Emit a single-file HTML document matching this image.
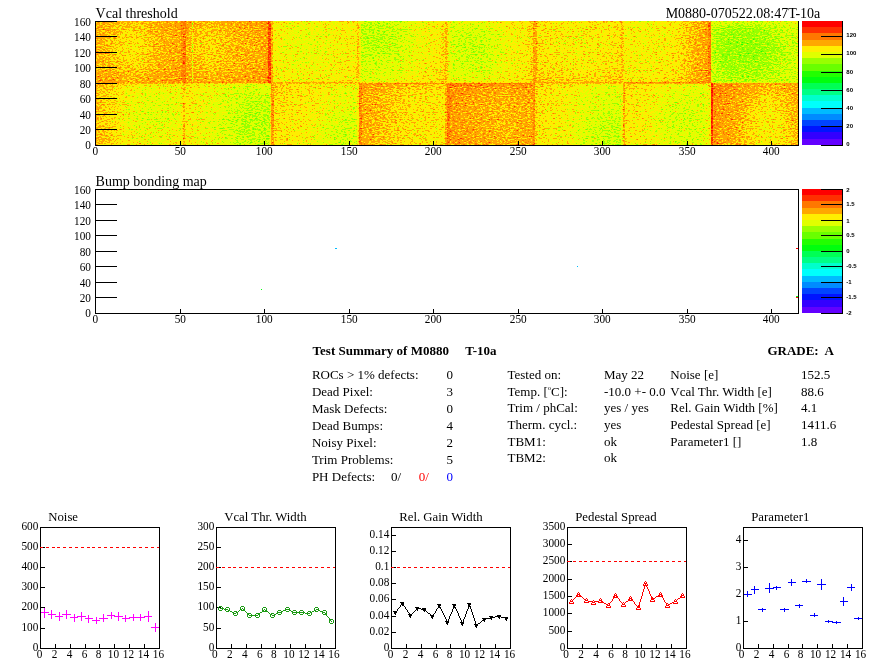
<!DOCTYPE html>
<html lang="en"><head><meta charset="utf-8"><title>Test Summary of M0880 T-10a</title>
<style>
html,body{margin:0;padding:0;background:#fff;}
body{width:896px;height:672px;overflow:hidden;}
svg{display:block;will-change:transform;}
.t{font-family:"Liberation Serif",serif;fill:#000;}
.b{font-family:"Liberation Serif",serif;font-weight:bold;fill:#000;}
.h{font-family:"Liberation Sans",sans-serif;font-weight:bold;fill:#000;}
</style></head><body>
<svg width="896" height="672" viewBox="0 0 896 672">
<defs>
<filter id="hm" filterUnits="userSpaceOnUse" x="95" y="21" width="704" height="125" color-interpolation-filters="sRGB">
<feTurbulence type="fractalNoise" baseFrequency="0.36 0.88" numOctaves="2" seed="3" result="n"/>
<feComponentTransfer in="n" result="n2"><feFuncA type="table" tableValues="0.000 0.000 0.000 0.000 0.038 0.156 0.252 0.330 0.394 0.449 0.500 0.551 0.606 0.670 0.748 0.844 0.962 1.000 1.000 1.000 1.000"/></feComponentTransfer>
<feColorMatrix in="n2" type="matrix" values="0 0 0 1 0  0 0 0 1 0  0 0 0 1 0  0 0 0 0 1" result="ng"/>
<feComposite in="SourceGraphic" in2="ng" operator="arithmetic" k1="0" k2="1" k3="0.360" k4="-0.180" result="v"/>
<feComponentTransfer in="v"><feFuncR type="discrete" tableValues="0.000 0.000 0.133 0.413 0.600 0.880 1.000 1.000 1.000 1.000 1.000"/><feFuncG type="discrete" tableValues="1.000 1.000 1.000 1.000 1.000 1.000 0.933 0.653 0.467 0.187 0.000"/><feFuncB type="discrete" tableValues="0.333 0.053 0.000 0.000 0.000 0.000 0.000 0.000 0.000 0.000 0.000"/></feComponentTransfer>
</filter>
<linearGradient id="g10"><stop offset="0" stop-color="#a9a9a9"/><stop offset="0.2" stop-color="#a4a4a4"/><stop offset="0.45" stop-color="#9e9e9e"/><stop offset="0.7" stop-color="#a6a6a6"/><stop offset="1" stop-color="#adadad"/></linearGradient>
<linearGradient id="v10" x1="0" y1="0" x2="0" y2="1"><stop offset="0" stop-color="#fff" stop-opacity="0.057"/><stop offset="0.3" stop-color="#fff" stop-opacity="0.000"/><stop offset="0.7" stop-color="#fff" stop-opacity="0.000"/><stop offset="1" stop-color="#fff" stop-opacity="0.115"/></linearGradient>
<linearGradient id="g11"><stop offset="0" stop-color="#adadad"/><stop offset="0.12" stop-color="#a5a5a5"/><stop offset="0.3" stop-color="#a1a1a1"/><stop offset="0.5" stop-color="#a5a5a5"/><stop offset="0.9" stop-color="#acacac"/><stop offset="1" stop-color="#b6b6b6"/></linearGradient>
<linearGradient id="v11" x1="0" y1="0" x2="0" y2="1"><stop offset="0" stop-color="#fff" stop-opacity="0.079"/><stop offset="0.25" stop-color="#fff" stop-opacity="0.000"/><stop offset="0.7" stop-color="#fff" stop-opacity="0.000"/><stop offset="1" stop-color="#fff" stop-opacity="0.099"/></linearGradient>
<linearGradient id="g12"><stop offset="0" stop-color="#909090"/><stop offset="0.4" stop-color="#8b8b8b"/><stop offset="0.7" stop-color="#8e8e8e"/><stop offset="1" stop-color="#929292"/></linearGradient>
<linearGradient id="v12" x1="0" y1="0" x2="0" y2="1"><stop offset="0" stop-color="#fff" stop-opacity="0.015"/><stop offset="0.5" stop-color="#fff" stop-opacity="0.000"/><stop offset="1" stop-color="#fff" stop-opacity="0.030"/></linearGradient>
<linearGradient id="g13"><stop offset="0" stop-color="#787878"/><stop offset="0.45" stop-color="#808080"/><stop offset="0.7" stop-color="#8c8c8c"/><stop offset="0.9" stop-color="#929292"/><stop offset="1" stop-color="#9e9e9e"/></linearGradient>
<linearGradient id="v13" x1="0" y1="0" x2="0" y2="1"><stop offset="0" stop-color="#fff" stop-opacity="0.000"/><stop offset="0.6" stop-color="#fff" stop-opacity="0.015"/><stop offset="1" stop-color="#fff" stop-opacity="0.073"/></linearGradient>
<linearGradient id="g14"><stop offset="0" stop-color="#909090"/><stop offset="0.06" stop-color="#7e7e7e"/><stop offset="0.4" stop-color="#7e7e7e"/><stop offset="0.65" stop-color="#8b8b8b"/><stop offset="0.9" stop-color="#929292"/><stop offset="1" stop-color="#a1a1a1"/></linearGradient>
<linearGradient id="v14" x1="0" y1="0" x2="0" y2="1"><stop offset="0" stop-color="#fff" stop-opacity="0.074"/><stop offset="0.2" stop-color="#fff" stop-opacity="0.000"/><stop offset="0.8" stop-color="#fff" stop-opacity="0.015"/><stop offset="1" stop-color="#fff" stop-opacity="0.089"/></linearGradient>
<linearGradient id="g15"><stop offset="0" stop-color="#999999"/><stop offset="0.3" stop-color="#929292"/><stop offset="0.5" stop-color="#909090"/><stop offset="0.8" stop-color="#949494"/><stop offset="1" stop-color="#999999"/></linearGradient>
<linearGradient id="v15" x1="0" y1="0" x2="0" y2="1"><stop offset="0" stop-color="#fff" stop-opacity="0.032"/><stop offset="0.3" stop-color="#fff" stop-opacity="0.000"/><stop offset="0.75" stop-color="#fff" stop-opacity="0.032"/><stop offset="1" stop-color="#fff" stop-opacity="0.128"/></linearGradient>
<linearGradient id="g16"><stop offset="0" stop-color="#909090"/><stop offset="0.4" stop-color="#8f8f8f"/><stop offset="0.6" stop-color="#959595"/><stop offset="0.8" stop-color="#a5a5a5"/><stop offset="1" stop-color="#b1b1b1"/></linearGradient>
<linearGradient id="v16" x1="0" y1="0" x2="0" y2="1"><stop offset="0" stop-color="#fff" stop-opacity="0.000"/><stop offset="0.8" stop-color="#fff" stop-opacity="0.017"/><stop offset="1" stop-color="#fff" stop-opacity="0.068"/></linearGradient>
<linearGradient id="g17"><stop offset="0" stop-color="#777777"/><stop offset="0.15" stop-color="#6e6e6e"/><stop offset="0.5" stop-color="#6d6d6d"/><stop offset="0.8" stop-color="#757575"/><stop offset="1" stop-color="#7c7c7c"/></linearGradient>
<linearGradient id="v17" x1="0" y1="0" x2="0" y2="1"><stop offset="0" stop-color="#fff" stop-opacity="0.122"/><stop offset="0.12" stop-color="#fff" stop-opacity="0.024"/><stop offset="0.5" stop-color="#fff" stop-opacity="0.000"/><stop offset="1" stop-color="#fff" stop-opacity="0.037"/></linearGradient>
<linearGradient id="g00"><stop offset="0" stop-color="#a3a3a3"/><stop offset="0.2" stop-color="#9b9b9b"/><stop offset="0.35" stop-color="#8f8f8f"/><stop offset="0.7" stop-color="#888888"/><stop offset="1" stop-color="#8a8a8a"/></linearGradient>
<linearGradient id="v00" x1="0" y1="0" x2="0" y2="1"><stop offset="0" stop-color="#fff" stop-opacity="0.094"/><stop offset="0.1" stop-color="#fff" stop-opacity="0.016"/><stop offset="0.6" stop-color="#fff" stop-opacity="0.000"/><stop offset="1" stop-color="#fff" stop-opacity="0.047"/></linearGradient>
<linearGradient id="g01"><stop offset="0" stop-color="#979797"/><stop offset="0.1" stop-color="#8f8f8f"/><stop offset="0.4" stop-color="#848484"/><stop offset="0.7" stop-color="#7c7c7c"/><stop offset="1" stop-color="#797979"/></linearGradient>
<linearGradient id="v01" x1="0" y1="0" x2="0" y2="1"><stop offset="0" stop-color="#fff" stop-opacity="0.070"/><stop offset="0.15" stop-color="#fff" stop-opacity="0.028"/><stop offset="0.7" stop-color="#fff" stop-opacity="0.000"/><stop offset="1" stop-color="#fff" stop-opacity="0.000"/></linearGradient>
<linearGradient id="g02"><stop offset="0" stop-color="#9b9b9b"/><stop offset="0.15" stop-color="#959595"/><stop offset="0.5" stop-color="#8f8f8f"/><stop offset="0.8" stop-color="#848484"/><stop offset="1" stop-color="#838383"/></linearGradient>
<linearGradient id="v02" x1="0" y1="0" x2="0" y2="1"><stop offset="0" stop-color="#fff" stop-opacity="0.075"/><stop offset="0.3" stop-color="#fff" stop-opacity="0.030"/><stop offset="1" stop-color="#fff" stop-opacity="0.000"/></linearGradient>
<linearGradient id="g03"><stop offset="0" stop-color="#acacac"/><stop offset="0.2" stop-color="#a6a6a6"/><stop offset="0.4" stop-color="#9e9e9e"/><stop offset="0.6" stop-color="#979797"/><stop offset="1" stop-color="#949494"/></linearGradient>
<linearGradient id="v03" x1="0" y1="0" x2="0" y2="1"><stop offset="0" stop-color="#fff" stop-opacity="0.141"/><stop offset="0.15" stop-color="#fff" stop-opacity="0.035"/><stop offset="1" stop-color="#fff" stop-opacity="0.000"/></linearGradient>
<linearGradient id="g04"><stop offset="0" stop-color="#b4b4b4"/><stop offset="0.3" stop-color="#acacac"/><stop offset="0.65" stop-color="#a5a5a5"/><stop offset="1" stop-color="#acacac"/></linearGradient>
<linearGradient id="v04" x1="0" y1="0" x2="0" y2="1"><stop offset="0" stop-color="#fff" stop-opacity="0.204"/><stop offset="0.12" stop-color="#fff" stop-opacity="0.061"/><stop offset="0.5" stop-color="#fff" stop-opacity="0.000"/><stop offset="1" stop-color="#fff" stop-opacity="0.041"/></linearGradient>
<linearGradient id="g05"><stop offset="0" stop-color="#979797"/><stop offset="0.3" stop-color="#909090"/><stop offset="0.6" stop-color="#848484"/><stop offset="1" stop-color="#7c7c7c"/></linearGradient>
<linearGradient id="v05" x1="0" y1="0" x2="0" y2="1"><stop offset="0" stop-color="#fff" stop-opacity="0.087"/><stop offset="0.2" stop-color="#fff" stop-opacity="0.029"/><stop offset="1" stop-color="#fff" stop-opacity="0.000"/></linearGradient>
<linearGradient id="g06"><stop offset="0" stop-color="#979797"/><stop offset="0.3" stop-color="#8f8f8f"/><stop offset="0.6" stop-color="#848484"/><stop offset="0.9" stop-color="#838383"/><stop offset="1" stop-color="#8a8a8a"/></linearGradient>
<linearGradient id="v06" x1="0" y1="0" x2="0" y2="1"><stop offset="0" stop-color="#fff" stop-opacity="0.088"/><stop offset="0.15" stop-color="#fff" stop-opacity="0.015"/><stop offset="1" stop-color="#fff" stop-opacity="0.000"/></linearGradient>
<linearGradient id="g07"><stop offset="0" stop-color="#b6b6b6"/><stop offset="0.2" stop-color="#adadad"/><stop offset="0.45" stop-color="#a1a1a1"/><stop offset="0.65" stop-color="#979797"/><stop offset="0.85" stop-color="#9c9c9c"/><stop offset="1" stop-color="#a8a8a8"/></linearGradient>
<linearGradient id="v07" x1="0" y1="0" x2="0" y2="1"><stop offset="0" stop-color="#fff" stop-opacity="0.151"/><stop offset="0.25" stop-color="#fff" stop-opacity="0.057"/><stop offset="1" stop-color="#fff" stop-opacity="0.000"/></linearGradient>
<radialGradient id="bl"><stop offset="0" stop-color="#000" stop-opacity="1"/><stop offset="0.5" stop-color="#000" stop-opacity="0.6"/><stop offset="1" stop-color="#000" stop-opacity="0"/></radialGradient>
</defs>
<g filter="url(#hm)" shape-rendering="crispEdges">
<rect x="95" y="21" width="704" height="125" fill="#909090"/>
<rect x="95.50" y="21.00" width="88.17" height="62.42" fill="url(#g10)"/><rect x="95.50" y="21.00" width="88.17" height="62.42" fill="url(#v10)"/>
<clipPath id="c10"><rect x="95.50" y="21.00" width="87.88" height="62.12"/></clipPath><ellipse cx="130.7" cy="45.9" rx="28.1" ry="26.1" fill="url(#bl)" opacity="0.051" clip-path="url(#c10)"/>
<rect x="95.50" y="82.03" width="87.88" height="1.1" fill="#b2b2b2"/><rect x="95.50" y="21.00" width="1.69" height="62.42" fill="#acacac"/><rect x="180.84" y="21.00" width="2.53" height="62.42" fill="#b9b9b9"/>
<rect x="183.38" y="21.00" width="88.17" height="62.42" fill="url(#g11)"/><rect x="183.38" y="21.00" width="88.17" height="62.42" fill="url(#v11)"/>
<clipPath id="c11"><rect x="183.38" y="21.00" width="87.88" height="62.12"/></clipPath><ellipse cx="209.7" cy="42.7" rx="26.4" ry="24.9" fill="url(#bl)" opacity="0.040" clip-path="url(#c11)"/>
<rect x="183.38" y="82.03" width="87.88" height="1.1" fill="#b6b6b6"/><rect x="183.38" y="21.00" width="2.53" height="62.42" fill="#c0c0c0"/><rect x="267.87" y="21.00" width="3.38" height="62.42" fill="#d4d4d4"/>
<rect x="192.16" y="21.00" width="1.18" height="62.12" fill="#868686"/>
<rect x="271.25" y="21.00" width="88.17" height="62.42" fill="url(#g12)"/><rect x="271.25" y="21.00" width="88.17" height="62.42" fill="url(#v12)"/>
<clipPath id="c12"><rect x="271.25" y="21.00" width="87.88" height="62.12"/></clipPath><ellipse cx="306.4" cy="45.9" rx="33.4" ry="28.0" fill="url(#bl)" opacity="0.036" clip-path="url(#c12)"/>
<rect x="271.25" y="82.03" width="87.88" height="1.1" fill="#acacac"/><rect x="271.25" y="21.00" width="1.69" height="62.42" fill="#acacac"/><rect x="357.44" y="21.00" width="1.69" height="62.42" fill="#a5a5a5"/>
<rect x="359.12" y="21.00" width="88.17" height="62.42" fill="url(#g13)"/><rect x="359.12" y="21.00" width="88.17" height="62.42" fill="url(#v13)"/>
<clipPath id="c13"><rect x="359.12" y="21.00" width="87.88" height="62.12"/></clipPath><ellipse cx="383.7" cy="39.6" rx="36.9" ry="31.1" fill="url(#bl)" opacity="0.074" clip-path="url(#c13)"/>
<rect x="359.12" y="82.03" width="87.88" height="1.1" fill="#9e9e9e"/><rect x="359.12" y="21.00" width="1.69" height="62.42" fill="#909090"/><rect x="445.31" y="21.00" width="1.69" height="62.42" fill="#a8a8a8"/>
<rect x="447.00" y="21.00" width="88.17" height="62.42" fill="url(#g14)"/><rect x="447.00" y="21.00" width="88.17" height="62.42" fill="url(#v14)"/>
<clipPath id="c14"><rect x="447.00" y="21.00" width="87.88" height="62.12"/></clipPath><ellipse cx="477.8" cy="49.0" rx="33.4" ry="31.1" fill="url(#bl)" opacity="0.060" clip-path="url(#c14)"/>
<rect x="447.00" y="82.03" width="87.88" height="1.1" fill="#9e9e9e"/><rect x="447.00" y="21.00" width="1.35" height="62.42" fill="#9e9e9e"/><rect x="533.19" y="21.00" width="1.69" height="62.42" fill="#afafaf"/>
<rect x="534.88" y="21.00" width="88.17" height="62.42" fill="url(#g15)"/><rect x="534.88" y="21.00" width="88.17" height="62.42" fill="url(#v15)"/>
<rect x="534.88" y="82.03" width="87.88" height="1.1" fill="#afafaf"/><rect x="534.88" y="21.00" width="1.69" height="62.42" fill="#afafaf"/><rect x="621.06" y="21.00" width="1.69" height="62.42" fill="#a5a5a5"/>
<rect x="622.75" y="21.00" width="88.17" height="62.42" fill="url(#g16)"/><rect x="622.75" y="21.00" width="88.17" height="62.42" fill="url(#v16)"/>
<rect x="622.75" y="82.03" width="87.88" height="1.1" fill="#b9b9b9"/><rect x="622.75" y="21.00" width="1.69" height="62.42" fill="#9e9e9e"/><rect x="708.09" y="21.00" width="2.53" height="62.42" fill="#c3c3c3"/>
<rect x="710.62" y="21.00" width="88.17" height="62.42" fill="url(#g17)"/><rect x="710.62" y="21.00" width="88.17" height="62.42" fill="url(#v17)"/>
<clipPath id="c17"><rect x="710.62" y="21.00" width="87.88" height="62.12"/></clipPath><ellipse cx="745.8" cy="49.0" rx="43.9" ry="34.2" fill="url(#bl)" opacity="0.073" clip-path="url(#c17)"/>
<rect x="710.62" y="82.03" width="87.88" height="1.1" fill="#838383"/><rect x="710.62" y="21.00" width="1.69" height="62.42" fill="#7f7f7f"/><rect x="796.81" y="21.00" width="1.69" height="62.42" fill="#868686"/>
<rect x="95.50" y="83.12" width="88.17" height="62.42" fill="url(#g00)"/><rect x="95.50" y="83.12" width="88.17" height="62.42" fill="url(#v00)"/>
<clipPath id="c00"><rect x="95.50" y="83.12" width="87.88" height="62.12"/></clipPath><ellipse cx="148.2" cy="117.3" rx="36.9" ry="31.1" fill="url(#bl)" opacity="0.046" clip-path="url(#c00)"/>
<rect x="95.50" y="83.12" width="87.88" height="0.9" fill="#a8a8a8"/><rect x="95.50" y="83.12" width="1.69" height="62.42" fill="#acacac"/><rect x="181.69" y="83.12" width="1.69" height="62.42" fill="#979797"/>
<rect x="183.38" y="83.12" width="88.17" height="62.42" fill="url(#g01)"/><rect x="183.38" y="83.12" width="88.17" height="62.42" fill="url(#v01)"/>
<clipPath id="c01"><rect x="183.38" y="83.12" width="87.88" height="62.12"/></clipPath><ellipse cx="249.3" cy="120.4" rx="35.1" ry="34.2" fill="url(#bl)" opacity="0.076" clip-path="url(#c01)"/>
<rect x="183.38" y="83.12" width="87.88" height="0.9" fill="#9e9e9e"/><rect x="183.38" y="83.12" width="1.69" height="62.42" fill="#a5a5a5"/><rect x="269.56" y="83.12" width="1.69" height="62.42" fill="#8d8d8d"/>
<rect x="271.25" y="83.12" width="88.17" height="62.42" fill="url(#g02)"/><rect x="271.25" y="83.12" width="88.17" height="62.42" fill="url(#v02)"/>
<clipPath id="c02"><rect x="271.25" y="83.12" width="87.88" height="62.12"/></clipPath><ellipse cx="341.6" cy="132.8" rx="35.1" ry="28.0" fill="url(#bl)" opacity="0.072" clip-path="url(#c02)"/>
<rect x="271.25" y="83.12" width="87.88" height="0.9" fill="#a5a5a5"/><rect x="271.25" y="83.12" width="2.53" height="62.42" fill="#b6b6b6"/><rect x="357.44" y="83.12" width="1.69" height="62.42" fill="#949494"/>
<rect x="359.12" y="83.12" width="88.17" height="62.42" fill="url(#g03)"/><rect x="359.12" y="83.12" width="88.17" height="62.42" fill="url(#v03)"/>
<rect x="359.12" y="83.12" width="87.88" height="0.9" fill="#b9b9b9"/><rect x="359.12" y="83.12" width="2.53" height="62.42" fill="#bcbcbc"/><rect x="445.31" y="83.12" width="1.69" height="62.42" fill="#acacac"/>
<rect x="447.00" y="83.12" width="88.17" height="62.42" fill="url(#g04)"/><rect x="447.00" y="83.12" width="88.17" height="62.42" fill="url(#v04)"/>
<rect x="447.00" y="83.12" width="87.88" height="0.9" fill="#c0c0c0"/><rect x="447.00" y="83.12" width="2.53" height="62.42" fill="#c0c0c0"/><rect x="533.19" y="83.12" width="1.69" height="62.42" fill="#b9b9b9"/>
<rect x="534.88" y="83.12" width="88.17" height="62.42" fill="url(#g05)"/><rect x="534.88" y="83.12" width="88.17" height="62.42" fill="url(#v05)"/>
<clipPath id="c05"><rect x="534.88" y="83.12" width="87.88" height="62.12"/></clipPath><ellipse cx="605.2" cy="129.7" rx="35.1" ry="31.1" fill="url(#bl)" opacity="0.074" clip-path="url(#c05)"/>
<rect x="534.88" y="83.12" width="87.88" height="0.9" fill="#a5a5a5"/><rect x="534.88" y="83.12" width="1.69" height="62.42" fill="#9e9e9e"/><rect x="621.06" y="83.12" width="1.69" height="62.42" fill="#8d8d8d"/>
<rect x="622.75" y="83.12" width="88.17" height="62.42" fill="url(#g06)"/><rect x="622.75" y="83.12" width="88.17" height="62.42" fill="url(#v06)"/>
<clipPath id="c06"><rect x="622.75" y="83.12" width="87.88" height="62.12"/></clipPath><ellipse cx="679.9" cy="120.4" rx="35.1" ry="31.1" fill="url(#bl)" opacity="0.061" clip-path="url(#c06)"/>
<rect x="622.75" y="83.12" width="87.88" height="0.9" fill="#acacac"/><rect x="622.75" y="83.12" width="2.53" height="62.42" fill="#afafaf"/><rect x="709.44" y="83.12" width="1.18" height="62.42" fill="#909090"/>
<rect x="710.62" y="83.12" width="88.17" height="62.42" fill="url(#g07)"/><rect x="710.62" y="83.12" width="88.17" height="62.42" fill="url(#v07)"/>
<clipPath id="c07"><rect x="710.62" y="83.12" width="87.88" height="62.12"/></clipPath><ellipse cx="763.4" cy="123.5" rx="28.1" ry="31.1" fill="url(#bl)" opacity="0.062" clip-path="url(#c07)"/>
<rect x="710.62" y="83.12" width="87.88" height="0.9" fill="#b2b2b2"/><rect x="710.62" y="83.12" width="2.53" height="62.42" fill="#e2e2e2"/><rect x="796.81" y="83.12" width="1.69" height="62.42" fill="#acacac"/>
</g>
<text class="t" transform="translate(91.0 148.6) scale(0.94 1)" font-size="12" text-anchor="end">0</text>
<text class="t" transform="translate(91.0 134.0) scale(0.94 1)" font-size="12" text-anchor="end">20</text>
<text class="t" transform="translate(91.0 119.0) scale(0.94 1)" font-size="12" text-anchor="end">40</text>
<text class="t" transform="translate(91.0 103.0) scale(0.94 1)" font-size="12" text-anchor="end">60</text>
<text class="t" transform="translate(91.0 88.0) scale(0.94 1)" font-size="12" text-anchor="end">80</text>
<text class="t" transform="translate(91.0 72.0) scale(0.94 1)" font-size="12" text-anchor="end">100</text>
<text class="t" transform="translate(91.0 57.0) scale(0.94 1)" font-size="12" text-anchor="end">120</text>
<text class="t" transform="translate(91.0 41.0) scale(0.94 1)" font-size="12" text-anchor="end">140</text>
<text class="t" transform="translate(91.0 26.0) scale(0.94 1)" font-size="12" text-anchor="end">160</text>
<text class="t" transform="translate(95.3 155.0) scale(0.94 1)" font-size="12" text-anchor="middle">0</text>
<text class="t" transform="translate(180.3 155.0) scale(0.94 1)" font-size="12" text-anchor="middle">50</text>
<text class="t" transform="translate(264.3 155.0) scale(0.94 1)" font-size="12" text-anchor="middle">100</text>
<text class="t" transform="translate(349.3 155.0) scale(0.94 1)" font-size="12" text-anchor="middle">150</text>
<text class="t" transform="translate(433.3 155.0) scale(0.94 1)" font-size="12" text-anchor="middle">200</text>
<text class="t" transform="translate(518.3 155.0) scale(0.94 1)" font-size="12" text-anchor="middle">250</text>
<text class="t" transform="translate(602.3 155.0) scale(0.94 1)" font-size="12" text-anchor="middle">300</text>
<text class="t" transform="translate(687.3 155.0) scale(0.94 1)" font-size="12" text-anchor="middle">350</text>
<text class="t" transform="translate(771.3 155.0) scale(0.94 1)" font-size="12" text-anchor="middle">400</text>
<path d="M95.5 21V146M95 145.5H799M798.5 21V146M95 129.5H117M95 114.5H117M95 98.5H117M95 83.5H117M95 67.5H117M95 52.5H117M95 36.5H117M95 21.5H117M180.5 141V145M264.5 141V145M349.5 141V145M433.5 141V145M518.5 141V145M602.5 141V145M687.5 141V145M771.5 141V145" stroke="#000" stroke-width="1" fill="none" shape-rendering="crispEdges"/>
<text class="t" x="95.6" y="18.0" font-size="14">Vcal threshold</text>
<text class="t" x="820.3" y="18" font-size="14" text-anchor="end">M0880-070522.08:47T-10a</text>
<rect x="802" y="139" width="40" height="6" fill="#6300ff" shape-rendering="crispEdges"/>
<rect x="802" y="132" width="40" height="7" fill="#3300ff" shape-rendering="crispEdges"/>
<rect x="802" y="126" width="40" height="6" fill="#0014ff" shape-rendering="crispEdges"/>
<rect x="802" y="120" width="40" height="6" fill="#0044ff" shape-rendering="crispEdges"/>
<rect x="802" y="114" width="40" height="6" fill="#008bff" shape-rendering="crispEdges"/>
<rect x="802" y="108" width="40" height="6" fill="#00bbff" shape-rendering="crispEdges"/>
<rect x="802" y="101" width="40" height="7" fill="#00fffc" shape-rendering="crispEdges"/>
<rect x="802" y="95" width="40" height="6" fill="#00ffcc" shape-rendering="crispEdges"/>
<rect x="802" y="89" width="40" height="6" fill="#00ff85" shape-rendering="crispEdges"/>
<rect x="802" y="83" width="40" height="6" fill="#00ff55" shape-rendering="crispEdges"/>
<rect x="802" y="77" width="40" height="6" fill="#00ff0e" shape-rendering="crispEdges"/>
<rect x="802" y="71" width="40" height="6" fill="#22ff00" shape-rendering="crispEdges"/>
<rect x="802" y="64" width="40" height="7" fill="#69ff00" shape-rendering="crispEdges"/>
<rect x="802" y="58" width="40" height="6" fill="#99ff00" shape-rendering="crispEdges"/>
<rect x="802" y="52" width="40" height="6" fill="#e0ff00" shape-rendering="crispEdges"/>
<rect x="802" y="46" width="40" height="6" fill="#ffee00" shape-rendering="crispEdges"/>
<rect x="802" y="40" width="40" height="6" fill="#ffa700" shape-rendering="crispEdges"/>
<rect x="802" y="33" width="40" height="7" fill="#ff7700" shape-rendering="crispEdges"/>
<rect x="802" y="27" width="40" height="6" fill="#ff3000" shape-rendering="crispEdges"/>
<rect x="802" y="21" width="40" height="6" fill="#ff0000" shape-rendering="crispEdges"/>
<text class="h" x="846.3" y="37.2" font-size="6">120</text>
<text class="h" x="846.3" y="55.2" font-size="6">100</text>
<text class="h" x="846.3" y="74.2" font-size="6">80</text>
<text class="h" x="846.3" y="92.1" font-size="6">60</text>
<text class="h" x="846.3" y="110.1" font-size="6">40</text>
<text class="h" x="846.3" y="128.1" font-size="6">20</text>
<text class="h" x="846.3" y="146.0" font-size="6">0</text>
<path d="M842.5 21V146M821 36.5H843M821 54.5H843M821 72.5H843M821 90.5H843M821 108.5H843M821 126.5H843M821 145.5H843" stroke="#000" stroke-width="1" fill="none" shape-rendering="crispEdges"/>
<text class="t" transform="translate(91.0 316.6) scale(0.94 1)" font-size="12" text-anchor="end">0</text>
<text class="t" transform="translate(91.0 302.0) scale(0.94 1)" font-size="12" text-anchor="end">20</text>
<text class="t" transform="translate(91.0 287.0) scale(0.94 1)" font-size="12" text-anchor="end">40</text>
<text class="t" transform="translate(91.0 271.0) scale(0.94 1)" font-size="12" text-anchor="end">60</text>
<text class="t" transform="translate(91.0 256.0) scale(0.94 1)" font-size="12" text-anchor="end">80</text>
<text class="t" transform="translate(91.0 240.0) scale(0.94 1)" font-size="12" text-anchor="end">100</text>
<text class="t" transform="translate(91.0 225.0) scale(0.94 1)" font-size="12" text-anchor="end">120</text>
<text class="t" transform="translate(91.0 209.0) scale(0.94 1)" font-size="12" text-anchor="end">140</text>
<text class="t" transform="translate(91.0 194.0) scale(0.94 1)" font-size="12" text-anchor="end">160</text>
<text class="t" transform="translate(95.3 323.0) scale(0.94 1)" font-size="12" text-anchor="middle">0</text>
<text class="t" transform="translate(180.3 323.0) scale(0.94 1)" font-size="12" text-anchor="middle">50</text>
<text class="t" transform="translate(264.3 323.0) scale(0.94 1)" font-size="12" text-anchor="middle">100</text>
<text class="t" transform="translate(349.3 323.0) scale(0.94 1)" font-size="12" text-anchor="middle">150</text>
<text class="t" transform="translate(433.3 323.0) scale(0.94 1)" font-size="12" text-anchor="middle">200</text>
<text class="t" transform="translate(518.3 323.0) scale(0.94 1)" font-size="12" text-anchor="middle">250</text>
<text class="t" transform="translate(602.3 323.0) scale(0.94 1)" font-size="12" text-anchor="middle">300</text>
<text class="t" transform="translate(687.3 323.0) scale(0.94 1)" font-size="12" text-anchor="middle">350</text>
<text class="t" transform="translate(771.3 323.0) scale(0.94 1)" font-size="12" text-anchor="middle">400</text>
<path d="M95.5 189V314M95 313.5H799M798.5 189V314M95 189.5H799M95 297.5H117M95 282.5H117M95 266.5H117M95 251.5H117M95 235.5H117M95 220.5H117M95 204.5H117M180.5 309V313M264.5 309V313M349.5 309V313M433.5 309V313M518.5 309V313M602.5 309V313M687.5 309V313M771.5 309V313" stroke="#000" stroke-width="1" fill="none" shape-rendering="crispEdges"/>
<text class="t" x="95.6" y="186.0" font-size="14">Bump bonding map</text>
<rect x="802" y="307" width="40" height="6" fill="#6300ff" shape-rendering="crispEdges"/>
<rect x="802" y="300" width="40" height="7" fill="#3300ff" shape-rendering="crispEdges"/>
<rect x="802" y="294" width="40" height="6" fill="#0014ff" shape-rendering="crispEdges"/>
<rect x="802" y="288" width="40" height="6" fill="#0044ff" shape-rendering="crispEdges"/>
<rect x="802" y="282" width="40" height="6" fill="#008bff" shape-rendering="crispEdges"/>
<rect x="802" y="276" width="40" height="6" fill="#00bbff" shape-rendering="crispEdges"/>
<rect x="802" y="269" width="40" height="7" fill="#00fffc" shape-rendering="crispEdges"/>
<rect x="802" y="263" width="40" height="6" fill="#00ffcc" shape-rendering="crispEdges"/>
<rect x="802" y="257" width="40" height="6" fill="#00ff85" shape-rendering="crispEdges"/>
<rect x="802" y="251" width="40" height="6" fill="#00ff55" shape-rendering="crispEdges"/>
<rect x="802" y="245" width="40" height="6" fill="#00ff0e" shape-rendering="crispEdges"/>
<rect x="802" y="239" width="40" height="6" fill="#22ff00" shape-rendering="crispEdges"/>
<rect x="802" y="232" width="40" height="7" fill="#69ff00" shape-rendering="crispEdges"/>
<rect x="802" y="226" width="40" height="6" fill="#99ff00" shape-rendering="crispEdges"/>
<rect x="802" y="220" width="40" height="6" fill="#e0ff00" shape-rendering="crispEdges"/>
<rect x="802" y="214" width="40" height="6" fill="#ffee00" shape-rendering="crispEdges"/>
<rect x="802" y="208" width="40" height="6" fill="#ffa700" shape-rendering="crispEdges"/>
<rect x="802" y="201" width="40" height="7" fill="#ff7700" shape-rendering="crispEdges"/>
<rect x="802" y="195" width="40" height="6" fill="#ff3000" shape-rendering="crispEdges"/>
<rect x="802" y="189" width="40" height="6" fill="#ff0000" shape-rendering="crispEdges"/>
<text class="h" x="846.3" y="192.0" font-size="6">2</text>
<text class="h" x="846.3" y="206.2" font-size="6">1.5</text>
<text class="h" x="846.3" y="223.0" font-size="6">1</text>
<text class="h" x="846.3" y="237.2" font-size="6">0.5</text>
<text class="h" x="846.3" y="253.2" font-size="6">0</text>
<text class="h" x="846.3" y="268.2" font-size="6">-0.5</text>
<text class="h" x="846.3" y="284.2" font-size="6">-1</text>
<text class="h" x="846.3" y="299.2" font-size="6">-1.5</text>
<text class="h" x="846.3" y="315.2" font-size="6">-2</text>
<path d="M842.5 189V314M821 189.5H843M821 204.5H843M821 220.5H843M821 235.5H843M821 251.5H843M821 266.5H843M821 282.5H843M821 297.5H843M821 313.5H843" stroke="#000" stroke-width="1" fill="none" shape-rendering="crispEdges"/>
<g shape-rendering="crispEdges"><rect x="335" y="248" width="2" height="1" fill="#00bbff"/><rect x="261" y="289" width="1" height="1" fill="#00ff0e"/><rect x="577" y="266" width="1" height="1" fill="#00bbff"/><rect x="796" y="248" width="2" height="1" fill="#ff0000"/><rect x="796" y="296" width="2" height="1" fill="#00ff0e"/><rect x="796" y="297" width="2" height="1" fill="#ff0000"/></g>
<text class="b" x="312.6" y="354.6" font-size="13">Test Summary of M0880</text>
<text class="b" x="465.2" y="354.6" font-size="13">T-10a</text>
<text class="b" x="767.4" y="354.6" font-size="13" xml:space="preserve">GRADE:  A</text>
<text class="t" x="311.9" y="379.0" font-size="13">ROCs &gt; 1% defects:</text><text class="t" x="446.6" y="379.0" font-size="13">0</text>
<text class="t" x="311.9" y="396.0" font-size="13">Dead Pixel:</text><text class="t" x="446.6" y="396.0" font-size="13">3</text>
<text class="t" x="311.9" y="413.0" font-size="13">Mask Defects:</text><text class="t" x="446.6" y="413.0" font-size="13">0</text>
<text class="t" x="311.9" y="430.0" font-size="13">Dead Bumps:</text><text class="t" x="446.6" y="430.0" font-size="13">4</text>
<text class="t" x="311.9" y="447.0" font-size="13">Noisy Pixel:</text><text class="t" x="446.6" y="447.0" font-size="13">2</text>
<text class="t" x="311.9" y="464.0" font-size="13">Trim Problems:</text><text class="t" x="446.6" y="464.0" font-size="13">5</text>
<text class="t" x="311.9" y="481.0" font-size="13">PH Defects:</text><text class="t" x="391" y="481.0" font-size="13">0/</text><text class="t" x="418.8" y="481.0" font-size="13" style="fill:#ff0000">0/</text><text class="t" x="446.6" y="481.0" font-size="13" style="fill:#0000ff">0</text>
<text class="t" x="507.5" y="379.0" font-size="13">Tested on:</text><text class="t" x="604" y="379.0" font-size="13">May 22</text>
<text class="t" x="507.5" y="396.0" font-size="13">Temp. [<tspan font-size="6.5" dy="-6.3">o</tspan><tspan dy="6.3">C]:</tspan></text><text class="t" x="604" y="396.0" font-size="13">-10.0 +- 0.0</text>
<text class="t" x="507.5" y="412.0" font-size="13">Trim / phCal:</text><text class="t" x="604" y="412.0" font-size="13">yes / yes</text>
<text class="t" x="507.5" y="429.0" font-size="13">Therm. cycl.:</text><text class="t" x="604" y="429.0" font-size="13">yes</text>
<text class="t" x="507.5" y="446.0" font-size="13">TBM1:</text><text class="t" x="604" y="446.0" font-size="13">ok</text>
<text class="t" x="507.5" y="462.0" font-size="13">TBM2:</text><text class="t" x="604" y="462.0" font-size="13">ok</text>
<text class="t" x="670.3" y="379.0" font-size="13">Noise [e]</text><text class="t" x="800.9" y="379.0" font-size="13">152.5</text>
<text class="t" x="670.3" y="396.0" font-size="13">Vcal Thr. Width [e]</text><text class="t" x="800.9" y="396.0" font-size="13">88.6</text>
<text class="t" x="670.3" y="412.0" font-size="13">Rel. Gain Width [%]</text><text class="t" x="800.9" y="412.0" font-size="13">4.1</text>
<text class="t" x="670.3" y="429.0" font-size="13">Pedestal Spread [e]</text><text class="t" x="800.9" y="429.0" font-size="13">1411.6</text>
<text class="t" x="670.3" y="446.0" font-size="13">Parameter1 []</text><text class="t" x="800.9" y="446.0" font-size="13">1.8</text>
<text class="t" transform="translate(38.3 651.0) scale(0.94 1)" font-size="12" text-anchor="end">0</text>
<text class="t" transform="translate(38.3 631.0) scale(0.94 1)" font-size="12" text-anchor="end">100</text>
<text class="t" transform="translate(38.3 610.0) scale(0.94 1)" font-size="12" text-anchor="end">200</text>
<text class="t" transform="translate(38.3 590.0) scale(0.94 1)" font-size="12" text-anchor="end">300</text>
<text class="t" transform="translate(38.3 570.0) scale(0.94 1)" font-size="12" text-anchor="end">400</text>
<text class="t" transform="translate(38.3 550.0) scale(0.94 1)" font-size="12" text-anchor="end">500</text>
<text class="t" transform="translate(38.3 530.0) scale(0.94 1)" font-size="12" text-anchor="end">600</text>
<text class="t" transform="translate(39.5 658.0) scale(0.94 1)" font-size="12" text-anchor="middle">0</text>
<text class="t" transform="translate(54.5 658.0) scale(0.94 1)" font-size="12" text-anchor="middle">2</text>
<text class="t" transform="translate(69.5 658.0) scale(0.94 1)" font-size="12" text-anchor="middle">4</text>
<text class="t" transform="translate(84.5 658.0) scale(0.94 1)" font-size="12" text-anchor="middle">6</text>
<text class="t" transform="translate(98.5 658.0) scale(0.94 1)" font-size="12" text-anchor="middle">8</text>
<text class="t" transform="translate(113.5 658.0) scale(0.94 1)" font-size="12" text-anchor="middle">10</text>
<text class="t" transform="translate(128.5 658.0) scale(0.94 1)" font-size="12" text-anchor="middle">12</text>
<text class="t" transform="translate(143.5 658.0) scale(0.94 1)" font-size="12" text-anchor="middle">14</text>
<text class="t" transform="translate(158.5 658.0) scale(0.94 1)" font-size="12" text-anchor="middle">16</text>
<path d="M40.5 527V649M159.5 527V649M40 527.5H160M40 648.5H160M40 628.5H45M40 607.5H45M40 587.5H45M40 567.5H45M40 547.5H45M55.5 644V648M70.5 644V648M85.5 644V648M99.5 644V648M114.5 644V648M129.5 644V648M144.5 644V648" stroke="#000" stroke-width="1" fill="none" shape-rendering="crispEdges"/>
<text class="t" x="48.2" y="521" font-size="12.8">Noise</text>
<path d="M40 547.5H159" stroke="#ff0000" stroke-width="1" stroke-dasharray="2.9 2.93" fill="none" shape-rendering="crispEdges"/>
<path d="M41 612.5H49M44.5 608V618M48 614.5H56M51.5 610V619M55 616.5H63M59.5 612V621M62 614.5H71M66.5 610V619M70 617.5H78M74.5 614V622M77 616.5H86M81.5 612V621M85 618.5H93M88.5 615V623M92 620.5H100M96.5 617V624M99 618.5H108M103.5 614V622M107 615.5H115M111.5 612V619M114 616.5H123M118.5 612V621M122 618.5H130M125.5 615V622M129 617.5H138M133.5 614V621M137 617.5H145M140.5 614V621M144 616.5H152M148.5 611V622M151 627.5H159M155.5 623V632" stroke="#ff00ff" stroke-width="1" fill="none" shape-rendering="crispEdges"/>
<text class="t" transform="translate(214.3 651.0) scale(0.94 1)" font-size="12" text-anchor="end">0</text>
<text class="t" transform="translate(214.3 631.0) scale(0.94 1)" font-size="12" text-anchor="end">50</text>
<text class="t" transform="translate(214.3 610.0) scale(0.94 1)" font-size="12" text-anchor="end">100</text>
<text class="t" transform="translate(214.3 590.0) scale(0.94 1)" font-size="12" text-anchor="end">150</text>
<text class="t" transform="translate(214.3 570.0) scale(0.94 1)" font-size="12" text-anchor="end">200</text>
<text class="t" transform="translate(214.3 550.0) scale(0.94 1)" font-size="12" text-anchor="end">250</text>
<text class="t" transform="translate(214.3 530.0) scale(0.94 1)" font-size="12" text-anchor="end">300</text>
<text class="t" transform="translate(214.9 658.0) scale(0.94 1)" font-size="12" text-anchor="middle">0</text>
<text class="t" transform="translate(229.9 658.0) scale(0.94 1)" font-size="12" text-anchor="middle">2</text>
<text class="t" transform="translate(244.9 658.0) scale(0.94 1)" font-size="12" text-anchor="middle">4</text>
<text class="t" transform="translate(259.9 658.0) scale(0.94 1)" font-size="12" text-anchor="middle">6</text>
<text class="t" transform="translate(273.9 658.0) scale(0.94 1)" font-size="12" text-anchor="middle">8</text>
<text class="t" transform="translate(288.9 658.0) scale(0.94 1)" font-size="12" text-anchor="middle">10</text>
<text class="t" transform="translate(303.9 658.0) scale(0.94 1)" font-size="12" text-anchor="middle">12</text>
<text class="t" transform="translate(318.9 658.0) scale(0.94 1)" font-size="12" text-anchor="middle">14</text>
<text class="t" transform="translate(333.9 658.0) scale(0.94 1)" font-size="12" text-anchor="middle">16</text>
<path d="M216.5 527V649M335.5 527V649M216 527.5H336M216 648.5H336M216 628.5H221M216 607.5H221M216 587.5H221M216 567.5H221M216 547.5H221M231.5 644V648M246.5 644V648M261.5 644V648M275.5 644V648M290.5 644V648M305.5 644V648M320.5 644V648" stroke="#000" stroke-width="1" fill="none" shape-rendering="crispEdges"/>
<text class="t" x="224.2" y="521" font-size="12.8">Vcal Thr. Width</text>
<path d="M216 567.5H335" stroke="#ff0000" stroke-width="1" stroke-dasharray="2.9 2.93" fill="none" shape-rendering="crispEdges"/>
<path d="M219 606.5h3M241 606.5h3M218 607.5h1M222 607.5h1M226 607.5h3M240 607.5h1M244 607.5h1M263 607.5h3M286 607.5h3M315 607.5h3M218 608.5h1M220 608.5h4M225 608.5h1M229 608.5h1M240 608.5h1M242 608.5h1M244 608.5h1M262 608.5h1M266 608.5h1M285 608.5h1M289 608.5h1M314 608.5h1M318 608.5h1M218 609.5h1M222 609.5h1M224 609.5h4M229 609.5h1M240 609.5h2M243 609.5h2M262 609.5h1M264 609.5h1M266 609.5h1M285 609.5h5M314 609.5h1M316 609.5h3M219 610.5h3M225 610.5h1M228 610.5h2M239 610.5h1M241 610.5h4M262 610.5h2M265 610.5h2M278 610.5h3M283 610.5h3M289 610.5h2M293 610.5h3M300 610.5h3M314 610.5h2M318 610.5h2M323 610.5h3M226 611.5h3M230 611.5h2M234 611.5h3M238 611.5h1M245 611.5h1M262 611.5h6M277 611.5h1M281 611.5h2M286 611.5h3M291 611.5h2M296 611.5h1M299 611.5h1M303 611.5h1M308 611.5h3M312 611.5h2M315 611.5h3M320 611.5h3M326 611.5h1M232 612.5h2M236 612.5h2M246 612.5h1M260 612.5h2M268 612.5h1M277 612.5h5M292 612.5h13M307 612.5h1M310 612.5h2M322 612.5h3M326 612.5h1M233 613.5h3M237 613.5h1M247 613.5h4M256 613.5h4M269 613.5h1M271 613.5h3M276 613.5h2M281 613.5h1M292 613.5h1M296 613.5h1M299 613.5h1M303 613.5h1M305 613.5h5M311 613.5h1M322 613.5h1M325 613.5h2M233 614.5h1M237 614.5h1M247 614.5h2M251 614.5h1M255 614.5h1M258 614.5h2M270 614.5h2M274 614.5h2M278 614.5h3M293 614.5h3M300 614.5h3M307 614.5h1M311 614.5h1M323 614.5h4M234 615.5h3M247 615.5h1M249 615.5h9M259 615.5h1M270 615.5h1M272 615.5h3M308 615.5h3M326 615.5h1M247 616.5h1M251 616.5h1M255 616.5h1M259 616.5h1M270 616.5h1M274 616.5h1M327 616.5h1M248 617.5h3M256 617.5h3M271 617.5h3M328 617.5h1M329 618.5h1M329 619.5h4M329 620.5h2M333 620.5h1M329 621.5h1M331 621.5h1M333 621.5h1M329 622.5h1M333 622.5h1M330 623.5h3" stroke="#1c9a14" stroke-width="1" fill="none" shape-rendering="crispEdges"/>
<text class="t" transform="translate(389.3 651.0) scale(0.94 1)" font-size="12" text-anchor="end">0</text>
<text class="t" transform="translate(389.3 635.0) scale(0.94 1)" font-size="12" text-anchor="end">0.02</text>
<text class="t" transform="translate(389.3 619.0) scale(0.94 1)" font-size="12" text-anchor="end">0.04</text>
<text class="t" transform="translate(389.3 602.0) scale(0.94 1)" font-size="12" text-anchor="end">0.06</text>
<text class="t" transform="translate(389.3 586.0) scale(0.94 1)" font-size="12" text-anchor="end">0.08</text>
<text class="t" transform="translate(389.3 570.0) scale(0.94 1)" font-size="12" text-anchor="end">0.1</text>
<text class="t" transform="translate(389.3 554.0) scale(0.94 1)" font-size="12" text-anchor="end">0.12</text>
<text class="t" transform="translate(389.3 538.0) scale(0.94 1)" font-size="12" text-anchor="end">0.14</text>
<text class="t" transform="translate(390.6 658.0) scale(0.94 1)" font-size="12" text-anchor="middle">0</text>
<text class="t" transform="translate(405.6 658.0) scale(0.94 1)" font-size="12" text-anchor="middle">2</text>
<text class="t" transform="translate(420.6 658.0) scale(0.94 1)" font-size="12" text-anchor="middle">4</text>
<text class="t" transform="translate(435.6 658.0) scale(0.94 1)" font-size="12" text-anchor="middle">6</text>
<text class="t" transform="translate(449.6 658.0) scale(0.94 1)" font-size="12" text-anchor="middle">8</text>
<text class="t" transform="translate(464.6 658.0) scale(0.94 1)" font-size="12" text-anchor="middle">10</text>
<text class="t" transform="translate(479.6 658.0) scale(0.94 1)" font-size="12" text-anchor="middle">12</text>
<text class="t" transform="translate(494.6 658.0) scale(0.94 1)" font-size="12" text-anchor="middle">14</text>
<text class="t" transform="translate(509.6 658.0) scale(0.94 1)" font-size="12" text-anchor="middle">16</text>
<path d="M391.5 527V649M510.5 527V649M391 527.5H511M391 648.5H511M391 632.5H396M391 616.5H396M391 599.5H396M391 583.5H396M391 567.5H396M391 551.5H396M391 535.5H396M406.5 644V648M421.5 644V648M436.5 644V648M450.5 644V648M465.5 644V648M480.5 644V648M495.5 644V648" stroke="#000" stroke-width="1" fill="none" shape-rendering="crispEdges"/>
<text class="t" x="399.2" y="521" font-size="12.8">Rel. Gain Width</text>
<path d="M391 567.5H510" stroke="#ff0000" stroke-width="1" stroke-dasharray="2.9 2.93" fill="none" shape-rendering="crispEdges"/>
<path d="M400 602.5h4M401 603.5h3M467 603.5h4M401 604.5h3M437 604.5h4M452 604.5h4M468 604.5h3M400 605.5h1M402 605.5h2M438 605.5h3M453 605.5h3M468 605.5h2M400 606.5h1M404 606.5h1M438 606.5h2M453 606.5h2M468 606.5h3M399 607.5h1M405 607.5h1M415 607.5h4M438 607.5h3M453 607.5h3M468 607.5h1M470 607.5h1M398 608.5h1M405 608.5h1M416 608.5h5M422 608.5h4M437 608.5h1M440 608.5h1M453 608.5h1M455 608.5h1M468 608.5h1M470 608.5h1M397 609.5h1M406 609.5h1M416 609.5h2M421 609.5h5M436 609.5h1M441 609.5h1M452 609.5h1M456 609.5h1M467 609.5h1M471 609.5h1M397 610.5h1M407 610.5h1M415 610.5h1M417 610.5h1M423 610.5h3M436 610.5h1M441 610.5h1M452 610.5h1M456 610.5h1M467 610.5h1M471 610.5h1M393 611.5h4M407 611.5h1M414 611.5h1M424 611.5h1M426 611.5h1M435 611.5h1M442 611.5h1M452 611.5h1M457 611.5h1M466 611.5h1M471 611.5h1M394 612.5h3M408 612.5h1M413 612.5h1M427 612.5h1M435 612.5h1M442 612.5h1M451 612.5h1M457 612.5h1M466 612.5h1M472 612.5h1M394 613.5h2M409 613.5h1M412 613.5h1M428 613.5h2M434 613.5h1M443 613.5h1M451 613.5h1M458 613.5h1M466 613.5h1M472 613.5h1M395 614.5h1M408 614.5h4M430 614.5h1M433 614.5h1M443 614.5h1M450 614.5h1M458 614.5h1M465 614.5h1M472 614.5h1M409 615.5h3M430 615.5h4M444 615.5h1M450 615.5h1M458 615.5h1M465 615.5h1M473 615.5h1M497 615.5h4M409 616.5h2M431 616.5h3M444 616.5h1M449 616.5h1M459 616.5h1M465 616.5h1M473 616.5h1M489 616.5h4M495 616.5h6M410 617.5h1M431 617.5h2M445 617.5h1M449 617.5h1M459 617.5h1M464 617.5h1M473 617.5h1M490 617.5h5M498 617.5h2M501 617.5h7M432 618.5h1M445 618.5h1M449 618.5h1M460 618.5h1M464 618.5h1M474 618.5h1M482 618.5h10M499 618.5h1M505 618.5h3M446 619.5h1M448 619.5h1M460 619.5h1M463 619.5h1M474 619.5h1M483 619.5h3M491 619.5h1M505 619.5h2M446 620.5h1M448 620.5h1M461 620.5h1M463 620.5h1M474 620.5h1M482 620.5h3M506 620.5h1M445 621.5h4M461 621.5h1M463 621.5h1M475 621.5h1M481 621.5h1M484 621.5h1M446 622.5h3M460 622.5h4M475 622.5h1M480 622.5h1M446 623.5h2M461 623.5h3M475 623.5h1M478 623.5h2M447 624.5h1M461 624.5h2M474 624.5h4M462 625.5h1M475 625.5h3M475 626.5h2M476 627.5h1" stroke="#000" stroke-width="1" fill="none" shape-rendering="crispEdges"/>
<text class="t" transform="translate(565.3 651.0) scale(0.94 1)" font-size="12" text-anchor="end">0</text>
<text class="t" transform="translate(565.3 634.0) scale(0.94 1)" font-size="12" text-anchor="end">500</text>
<text class="t" transform="translate(565.3 616.0) scale(0.94 1)" font-size="12" text-anchor="end">1000</text>
<text class="t" transform="translate(565.3 599.0) scale(0.94 1)" font-size="12" text-anchor="end">1500</text>
<text class="t" transform="translate(565.3 582.0) scale(0.94 1)" font-size="12" text-anchor="end">2000</text>
<text class="t" transform="translate(565.3 564.0) scale(0.94 1)" font-size="12" text-anchor="end">2500</text>
<text class="t" transform="translate(565.3 547.0) scale(0.94 1)" font-size="12" text-anchor="end">3000</text>
<text class="t" transform="translate(565.3 530.0) scale(0.94 1)" font-size="12" text-anchor="end">3500</text>
<text class="t" transform="translate(566.0 658.0) scale(0.94 1)" font-size="12" text-anchor="middle">0</text>
<text class="t" transform="translate(581.0 658.0) scale(0.94 1)" font-size="12" text-anchor="middle">2</text>
<text class="t" transform="translate(596.0 658.0) scale(0.94 1)" font-size="12" text-anchor="middle">4</text>
<text class="t" transform="translate(611.0 658.0) scale(0.94 1)" font-size="12" text-anchor="middle">6</text>
<text class="t" transform="translate(625.0 658.0) scale(0.94 1)" font-size="12" text-anchor="middle">8</text>
<text class="t" transform="translate(640.0 658.0) scale(0.94 1)" font-size="12" text-anchor="middle">10</text>
<text class="t" transform="translate(655.0 658.0) scale(0.94 1)" font-size="12" text-anchor="middle">12</text>
<text class="t" transform="translate(670.0 658.0) scale(0.94 1)" font-size="12" text-anchor="middle">14</text>
<text class="t" transform="translate(685.0 658.0) scale(0.94 1)" font-size="12" text-anchor="middle">16</text>
<path d="M567.5 527V649M686.5 527V649M567 527.5H687M567 648.5H687M567 631.5H572M567 613.5H572M567 596.5H572M567 579.5H572M567 561.5H572M567 544.5H572M582.5 644V648M597.5 644V648M612.5 644V648M626.5 644V648M641.5 644V648M656.5 644V648M671.5 644V648" stroke="#000" stroke-width="1" fill="none" shape-rendering="crispEdges"/>
<text class="t" x="575.2" y="521" font-size="12.8">Pedestal Spread</text>
<path d="M567 561.5H686" stroke="#ff0000" stroke-width="1" stroke-dasharray="2.9 2.93" fill="none" shape-rendering="crispEdges"/>
<path d="M645 581.5h1M644 582.5h1M646 582.5h1M644 583.5h3M643 584.5h1M645 584.5h1M647 584.5h1M643 585.5h5M644 586.5h1M646 586.5h1M644 587.5h1M647 587.5h1M644 588.5h1M647 588.5h1M643 589.5h1M648 589.5h1M643 590.5h1M648 590.5h1M643 591.5h1M649 591.5h1M578 592.5h1M642 592.5h1M649 592.5h1M660 592.5h1M577 593.5h1M579 593.5h1M615 593.5h1M642 593.5h1M649 593.5h1M659 593.5h1M661 593.5h1M682 593.5h1M577 594.5h3M614 594.5h1M616 594.5h1M642 594.5h1M650 594.5h1M659 594.5h3M681 594.5h1M683 594.5h1M576 595.5h2M579 595.5h2M614 595.5h3M642 595.5h1M650 595.5h1M658 595.5h2M661 595.5h2M681 595.5h3M576 596.5h6M613 596.5h2M616 596.5h2M630 596.5h1M641 596.5h1M651 596.5h1M656 596.5h7M680 596.5h2M684 596.5h1M575 597.5h1M582 597.5h1M613 597.5h5M629 597.5h1M631 597.5h1M641 597.5h1M651 597.5h2M655 597.5h1M662 597.5h1M680 597.5h5M574 598.5h1M583 598.5h1M586 598.5h1M600 598.5h1M613 598.5h1M618 598.5h1M629 598.5h3M641 598.5h1M651 598.5h4M663 598.5h1M678 598.5h2M571 599.5h1M573 599.5h1M584 599.5h2M587 599.5h1M599 599.5h1M601 599.5h1M612 599.5h1M619 599.5h1M628 599.5h2M631 599.5h2M640 599.5h1M651 599.5h3M663 599.5h1M675 599.5h1M677 599.5h1M570 600.5h1M572 600.5h1M585 600.5h3M593 600.5h1M599 600.5h3M612 600.5h1M619 600.5h1M628 600.5h5M640 600.5h1M650 600.5h1M654 600.5h1M664 600.5h1M674 600.5h1M676 600.5h1M570 601.5h3M584 601.5h1M588 601.5h5M594 601.5h5M601 601.5h2M611 601.5h1M620 601.5h1M626 601.5h2M633 601.5h1M640 601.5h1M650 601.5h5M664 601.5h1M674 601.5h3M569 602.5h1M573 602.5h1M584 602.5h5M592 602.5h3M598 602.5h6M610 602.5h1M621 602.5h1M623 602.5h1M625 602.5h1M634 602.5h1M639 602.5h1M665 602.5h1M672 602.5h2M677 602.5h1M569 603.5h5M591 603.5h1M595 603.5h1M604 603.5h2M608 603.5h2M622 603.5h1M624 603.5h1M634 603.5h1M639 603.5h1M666 603.5h2M670 603.5h2M673 603.5h5M591 604.5h5M606 604.5h2M609 604.5h1M622 604.5h3M635 604.5h1M639 604.5h1M666 604.5h1M668 604.5h2M607 605.5h3M621 605.5h1M625 605.5h1M636 605.5h1M638 605.5h2M666 605.5h3M606 606.5h1M610 606.5h1M621 606.5h5M637 606.5h3M665 606.5h1M669 606.5h1M606 607.5h5M637 607.5h3M665 607.5h5M636 608.5h1M640 608.5h1M636 609.5h5" stroke="#ff0000" stroke-width="1" fill="none" shape-rendering="crispEdges"/>
<text class="t" transform="translate(741.3 651.0) scale(0.94 1)" font-size="12" text-anchor="end">0</text>
<text class="t" transform="translate(741.3 624.0) scale(0.94 1)" font-size="12" text-anchor="end">1</text>
<text class="t" transform="translate(741.3 597.0) scale(0.94 1)" font-size="12" text-anchor="end">2</text>
<text class="t" transform="translate(741.3 570.0) scale(0.94 1)" font-size="12" text-anchor="end">3</text>
<text class="t" transform="translate(741.3 543.0) scale(0.94 1)" font-size="12" text-anchor="end">4</text>
<text class="t" transform="translate(741.6 658.0) scale(0.94 1)" font-size="12" text-anchor="middle">0</text>
<text class="t" transform="translate(756.6 658.0) scale(0.94 1)" font-size="12" text-anchor="middle">2</text>
<text class="t" transform="translate(771.6 658.0) scale(0.94 1)" font-size="12" text-anchor="middle">4</text>
<text class="t" transform="translate(786.6 658.0) scale(0.94 1)" font-size="12" text-anchor="middle">6</text>
<text class="t" transform="translate(800.6 658.0) scale(0.94 1)" font-size="12" text-anchor="middle">8</text>
<text class="t" transform="translate(815.6 658.0) scale(0.94 1)" font-size="12" text-anchor="middle">10</text>
<text class="t" transform="translate(830.6 658.0) scale(0.94 1)" font-size="12" text-anchor="middle">12</text>
<text class="t" transform="translate(845.6 658.0) scale(0.94 1)" font-size="12" text-anchor="middle">14</text>
<text class="t" transform="translate(860.6 658.0) scale(0.94 1)" font-size="12" text-anchor="middle">16</text>
<path d="M743.5 527V649M862.5 527V649M743 527.5H863M743 648.5H863M743 621.5H748M743 594.5H748M743 567.5H748M743 540.5H748M758.5 644V648M773.5 644V648M788.5 644V648M802.5 644V648M817.5 644V648M832.5 644V648M847.5 644V648" stroke="#000" stroke-width="1" fill="none" shape-rendering="crispEdges"/>
<text class="t" x="751.2" y="521" font-size="12.8">Parameter1</text>
<path d="M744 594.5H752M747.5 591V597M751 589.5H759M754.5 586V594M758 609.5H766M762.5 608V612M765 588.5H774M769.5 583V593M773 587.5H781M776.5 586V590M780 609.5H789M784.5 608V612M788 582.5H796M791.5 579V586M795 605.5H803M799.5 604V608M802 581.5H811M806.5 579V583M810 615.5H818M814.5 613V617M817 584.5H826M821.5 579V590M825 621.5H833M828.5 620V623M832 622.5H841M836.5 621V624M840 601.5H848M843.5 597V606M847 587.5H855M851.5 584V591M854 618.5H862M858.5 617V620" stroke="#0000ff" stroke-width="1" fill="none" shape-rendering="crispEdges"/>
</svg>
</body></html>
